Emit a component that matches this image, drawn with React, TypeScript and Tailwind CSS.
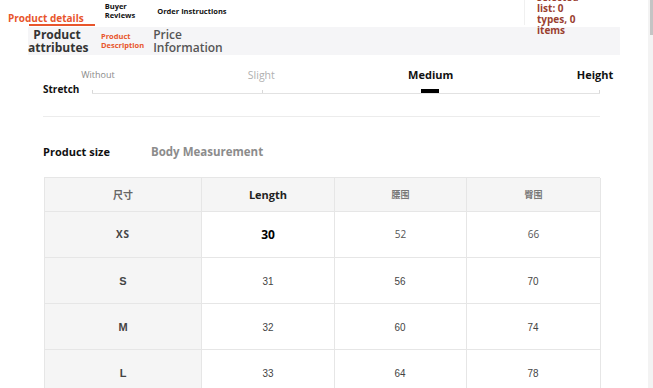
const sizes = [
  { size: "XS", length: "30", waist: "52", hip: "66" },
  { size: "S", length: "31", waist: "56", hip: "70" },
  { size: "M", length: "32", waist: "60", hip: "74" },
  { size: "L", length: "33", waist: "64", hip: "78" },
];

const levels = [
  { label: "Without", cls: "text-[9px] font-normal text-[#8a8a8a]" },
  { label: "Slight", cls: "text-[10.5px] font-normal text-[#b0b0b0]" },
  { label: "Medium", cls: "text-[11px] font-bold text-[#111]" },
  { label: "Height", cls: "text-[11px] font-bold text-[#111]" },
];

function TopTabs() {
  return (
    <div className="relative">
      <div className="flex h-[27px] items-start bg-white">
        <div className="relative ml-[8px] pt-[4px]">
          <span className="text-[10px] font-bold leading-[14px] text-[#e8552c]">Product details</span>
          <div className="absolute left-[21px] top-[24px] h-[2px] w-[66px] bg-[#e8552c]" />
        </div>
        <div className="ml-[21px] pt-[2px] text-[7.5px] font-bold leading-[9px] text-[#111]">
          Buyer
          <br />
          Reviews
        </div>
        <div className="ml-[22px] pt-[7px] text-[7.5px] font-bold leading-[9px] text-[#111]">
          Order Instructions
        </div>
        <div className="ml-auto mr-[123px] h-[25px] w-px bg-[#f0f0f0]" />
      </div>
      <div className="ml-[28px] mr-[28px] flex h-[28px] items-center bg-[#f5f5f7]">
        <div className="w-[58px] text-center text-[12px] font-bold leading-[13px] text-[#333]">
          Product
          <br />
          attributes
        </div>
        <div className="ml-[15px] text-[7.5px] font-bold leading-[9px] text-[#e8552c]">
          Product
          <br />
          Description
        </div>
        <div className="ml-[9px] text-[12px] font-semibold leading-[13px] text-[#555]">
          Price
          <br />
          Information
        </div>
      </div>
      <div className="absolute left-[537px] top-[-8px] text-[10px] font-bold leading-[11px] text-[#9a3f30]">
        selected
        <br />
        list: 0
        <br />
        types, 0
        <br />
        items
      </div>
    </div>
  );
}

function StretchScale() {
  return (
    <div className="ml-[43px] mr-[48px] pt-[13px]">
      <div className="ml-[49px] flex justify-between">
        {levels.map((l, i) => (
          <div key={l.label} className={`flex w-0 justify-center ${i === 0 ? "translate-x-[6px]" : i === 3 ? "-translate-x-[5px]" : ""}`}>
            <span className={`whitespace-nowrap leading-[14px] ${l.cls}`}>{l.label}</span>
          </div>
        ))}
      </div>
      <div className="mt-[1px] flex items-end">
        <span className="w-[49px] text-[10px] font-bold leading-[13px] text-[#111]">Stretch</span>
        <div className="relative mb-[2px] h-px flex-1 bg-[#e2e2e2]">
          <div className="absolute left-0 top-[-3px] h-[3px] w-px bg-[#d8d8d8]" />
          <div className="absolute left-[170px] top-[-3px] h-[3px] w-px bg-[#d8d8d8]" />
          <div className="absolute right-0 top-[-3px] h-[3px] w-px bg-[#d8d8d8]" />
          <div className="absolute left-[329px] top-[-4px] h-[4px] w-[18px] bg-black" />
        </div>
      </div>
      <div className="mt-[20px] h-px bg-[#ececec]" />
    </div>
  );
}

const cjk = { fontFamily: '"Noto Sans CJK SC", sans-serif' };

function SizeTable() {
  return (
    <div className="ml-[43px] mr-[48px]">
      <div className="flex items-end pt-[26px]">
        <span className="w-[108px] text-[11px] font-bold text-[#111]">Product size</span>
        <span className="text-[11.5px] font-bold text-[#8c8c8c]">Body Measurement</span>
      </div>
      <div className="mt-[17px] ml-px grid grid-cols-[157px_133px_132px_134px] border-l border-t border-[#e6e6e6] text-center">
        <div className="flex h-[34px] items-center justify-center border-b border-r border-[#e6e6e6] bg-[#f5f5f5] text-[10px] font-bold text-[#666]" style={cjk}>尺寸</div>
        <div className="flex h-[34px] items-center justify-center border-b border-r border-[#e6e6e6] bg-[#f5f5f5] text-[11px] font-bold text-[#222]">Length</div>
        <div className="flex h-[34px] items-center justify-center border-b border-r border-[#e6e6e6] bg-[#f5f5f5] text-[9px] font-bold text-[#777]" style={cjk}>腰围</div>
        <div className="flex h-[34px] items-center justify-center border-b border-r border-[#e6e6e6] bg-[#f5f5f5] text-[9px] font-bold text-[#777]" style={cjk}>臀围</div>
        {sizes.map((r, i) => {
          const first = i === 0;
          const num = first
            ? "font-['Open_Sans'] text-[10px] text-[#555]"
            : "font-['Liberation_Sans'] text-[11px] text-[#444] scale-x-90";
          return [
            <div key={r.size + "s"} className={`flex h-[46px] items-center justify-center border-b border-r border-[#e6e6e6] bg-[#f5f5f5] font-bold text-[#444] ${first ? "text-[10px] tracking-[1px]" : "font-['Liberation_Sans'] text-[11px]"}`}>{r.size}</div>,
            <div key={r.size + "l"} className="flex h-[46px] items-center justify-center border-b border-r border-[#e6e6e6]">
              <span className={first ? "text-[12px] font-bold text-black" : num}>{r.length}</span>
            </div>,
            <div key={r.size + "w"} className="flex h-[46px] items-center justify-center border-b border-r border-[#e6e6e6]">
              <span className={num}>{r.waist}</span>
            </div>,
            <div key={r.size + "h"} className="flex h-[46px] items-center justify-center border-b border-r border-[#e6e6e6]">
              <span className={num}>{r.hip}</span>
            </div>,
          ];
        })}
      </div>
    </div>
  );
}

export default function App() {
  return (
    <div className="flex h-[388px] w-[653px] overflow-hidden bg-white font-['Open_Sans']">
      <div className="w-[648px] shrink-0">
        <TopTabs />
        <StretchScale />
        <SizeTable />
      </div>
      <div className="w-[5px] bg-[#f3f3f3]">
        <div className="ml-[2px] h-[35px] w-[3px] bg-[#c4c4c4]" />
      </div>
    </div>
  );
}
